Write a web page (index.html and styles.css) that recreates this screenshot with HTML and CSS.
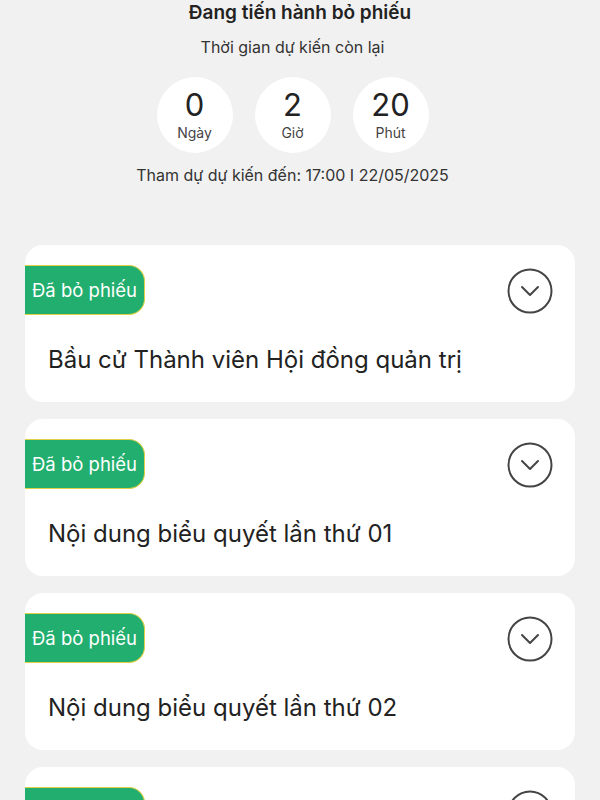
FILE: index.html
```html
<!DOCTYPE html>
<html lang="vi">
  <head>
    <meta charset="UTF-8" />
    <title>Đang tiến hành bỏ phiếu</title>
    <link rel="stylesheet" href="styles.css">
  </head>
  <body>
    <div class="header">
      <h1 class="title">Đang tiến hành bỏ phiếu</h1>
      <div class="timer">
        <p class="subtitle">Thời gian dự kiến còn lại</p>
        <div class="countdown">
          <div class="unit"><span class="num">0</span><span class="label">Ngày</span></div>
          <div class="unit"><span class="num">2</span><span class="label">Giờ</span></div>
          <div class="unit"><span class="num">20</span><span class="label">Phút</span></div>
        </div>
        <p class="deadline">Tham dự dự kiến đến: 17:00 I 22/05/2025</p>
      </div>
    </div>

    <div class="cards">
      <div class="card">
        <div class="card-top">
          <span class="badge">Đã bỏ phiếu</span>
          <svg class="toggle" width="46" height="46" viewBox="0 0 46 46">
            <circle cx="23" cy="23" r="21.5" fill="none" stroke="#444" stroke-width="2" />
            <polyline points="15,19 23,27 31,19" fill="none" stroke="#444" stroke-width="2" stroke-linecap="round" stroke-linejoin="round" />
          </svg>
        </div>
        <div class="card-title">Bầu cử Thành viên Hội đồng quản trị</div>
      </div>
      <div class="card">
        <div class="card-top">
          <span class="badge">Đã bỏ phiếu</span>
          <svg class="toggle" width="46" height="46" viewBox="0 0 46 46">
            <circle cx="23" cy="23" r="21.5" fill="none" stroke="#444" stroke-width="2" />
            <polyline points="15,19 23,27 31,19" fill="none" stroke="#444" stroke-width="2" stroke-linecap="round" stroke-linejoin="round" />
          </svg>
        </div>
        <div class="card-title">Nội dung biểu quyết lần thứ 01</div>
      </div>
      <div class="card">
        <div class="card-top">
          <span class="badge">Đã bỏ phiếu</span>
          <svg class="toggle" width="46" height="46" viewBox="0 0 46 46">
            <circle cx="23" cy="23" r="21.5" fill="none" stroke="#444" stroke-width="2" />
            <polyline points="15,19 23,27 31,19" fill="none" stroke="#444" stroke-width="2" stroke-linecap="round" stroke-linejoin="round" />
          </svg>
        </div>
        <div class="card-title">Nội dung biểu quyết lần thứ 02</div>
      </div>
      <div class="card">
        <div class="card-top">
          <span class="badge">Đã bỏ phiếu</span>
          <svg class="toggle" width="46" height="46" viewBox="0 0 46 46">
            <circle cx="23" cy="23" r="21.5" fill="none" stroke="#444" stroke-width="2" />
            <polyline points="15,19 23,27 31,19" fill="none" stroke="#444" stroke-width="2" stroke-linecap="round" stroke-linejoin="round" />
          </svg>
        </div>
        <div class="card-title">Nội dung biểu quyết lần thứ 03</div>
      </div>
    </div>
  </body>
</html>
```

FILE: styles.css
```css
body {
  margin: 0;
  background-color: #f1f1f1;
  font-family: Inter, 'Noto Sans', sans-serif;
  color: #222;
}

.header {
  text-align: center;
}
.title {
  margin: 0;
  font-size: 19px;
  line-height: 26px;
  font-weight: 600;
  color: #222;
}
.timer {
  padding-right: 15px;
}
.subtitle {
  margin: 11px 0 0 0;
  font-size: 16px;
  line-height: 20px;
  color: #333;
}
.deadline {
  margin: 12px 0 0 0;
  font-size: 16px;
  line-height: 20px;
  color: #333;
}

.countdown {
  display: flex;
  justify-content: center;
  gap: 22px;
  margin-top: 20px;
}
.unit {
  width: 76px;
  height: 76px;
  border-radius: 50%;
  background-color: white;
  display: flex;
  flex-direction: column;
  align-items: center;
  justify-content: center;
}
.num {
  font-size: 31px;
  line-height: 32px;
  color: #222;
}
.label {
  margin-top: 4px;
  font-size: 14px;
  line-height: 16px;
  color: #444;
}

.cards {
  display: flex;
  flex-direction: column;
  gap: 17px;
  margin-top: 60px;
  padding: 0 25px;
}
.card {
  background-color: white;
  border-radius: 18px;
  padding: 20px 0 27px 0;
}
.card-top {
  display: flex;
  justify-content: space-between;
  align-items: center;
  padding-right: 22px;
}
.badge {
  display: flex;
  align-items: center;
  height: 48px;
  padding: 0 7px 0 7px;
  background-color: #22ae6e;
  border: solid 1px #e0d046;
  border-left: none;
  border-radius: 0 16px 16px 0;
  color: white;
  font-size: 18.5px;
}
.toggle {
  display: block;
  margin-top: 2px;
}
.card-title {
  margin-top: 30px;
  padding-left: 23px;
  font-size: 24px;
  line-height: 30px;
  color: #222;
}
```
